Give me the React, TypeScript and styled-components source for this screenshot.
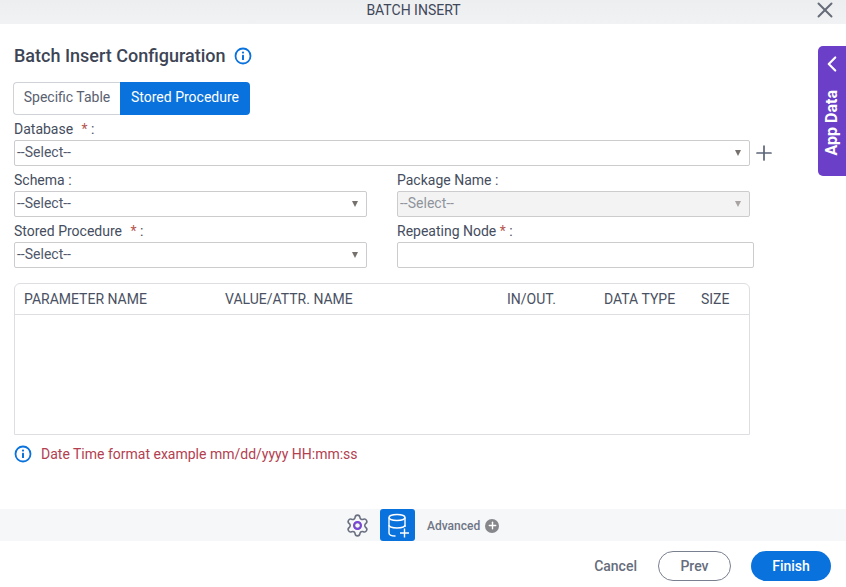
import React from 'react';
import styled, { createGlobalStyle } from 'styled-components';
import { X, Plus, ChevronLeft, Settings } from 'lucide-react';

const GlobalStyle = createGlobalStyle`
  html, body {
    margin: 0;
    padding: 0;
    background: #fff;
    font-family: Roboto, "Liberation Sans", sans-serif;
    color: #3f4759;
  }
`;

const Page = styled.div`
  position: relative;
  width: 846px;
  height: 587px;
  display: flex;
  flex-direction: column;
  overflow: hidden;
`;

const TitleBar = styled.header`
  height: 24px;
  flex: none;
  display: flex;
  align-items: center;
  justify-content: center;
  position: relative;
  background: linear-gradient(#eceef0, #f1f2f4);
  font-size: 14px;
  line-height: 20px;
  color: #3f4759;
  padding: 0 19px 4px 0;
  box-sizing: border-box;
`;

const CloseButton = styled.span`
  position: absolute;
  right: 8px;
  top: -3px;
  display: flex;
  color: #666c78;
`;

const Main = styled.main`
  flex: 1;
  padding: 20px 0 0 14px;
  box-sizing: border-box;
`;

const Heading = styled.div`
  display: flex;
  align-items: center;
  gap: 8px;
  height: 22px;
  font-size: 18px;
  font-weight: 500;
  color: #3d4555;

  svg {
    margin-top: 2px;
  }
`;

const Tabs = styled.div`
  display: flex;
  width: 237px;
  height: 33px;
  margin: 16px 0 0 -1px;
`;

const Tab = styled.div<{ $active?: boolean }>`
  flex: ${(p) => (p.$active ? '0 0 130px' : '1')};
  display: flex;
  align-items: center;
  justify-content: center;
  box-sizing: border-box;
  padding-bottom: 3px;
  font-size: 14px;
  color: ${(p) => (p.$active ? '#fff' : '#5a6170')};
  background: ${(p) => (p.$active ? '#0a72dc' : '#fff')};
  border: ${(p) => (p.$active ? 'none' : '1px solid #cfd2d6')};
  border-right: none;
  border-radius: ${(p) => (p.$active ? '0 4px 4px 0' : '4px 0 0 4px')};
`;

const Label = styled.label`
  display: block;
  height: 18px;
  margin-top: 5px;
  font-size: 14px;
  line-height: 18px;
  color: #454d5e;
`;

const Star = styled.span<{ $gap?: boolean }>`
  color: #b5564f;
  margin-left: ${(p) => (p.$gap ? '5px' : '0')};
`;

const WideRow = styled.div`
  display: flex;
  align-items: center;
  width: 760px;
  gap: 2px;
  margin-top: 2px;
`;

const Grid = styled.div`
  display: grid;
  grid-template-columns: 353px 353px;
  column-gap: 30px;
`;

const Field = styled.div`
  min-width: 0;
`;

const SelectBox = styled.div<{ $disabled?: boolean; $wide?: boolean }>`
  position: relative;
  width: ${(p) => (p.$wide ? '736px' : '353px')};
  flex: none;
  height: 26px;
  margin-top: ${(p) => (p.$wide ? '0' : '2px')};
  padding: 0 0 2px 2px;
  box-sizing: border-box;
  display: flex;
  align-items: center;
  font-size: 14px;
  color: ${(p) => (p.$disabled ? '#8f939b' : '#50576a')};
  background: ${(p) => (p.$disabled ? '#f3f3f4' : '#fff')};
  border: 1px solid #cccccf;
  border-radius: 2px;
`;

const Caret = styled.span<{ $disabled?: boolean }>`
  position: absolute;
  right: 8px;
  top: 9px;
  width: 0;
  height: 0;
  border-left: 3.5px solid transparent;
  border-right: 3.5px solid transparent;
  border-top: 6px solid ${(p) => (p.$disabled ? '#a8a3a0' : '#77716d')};
`;

const TextInput = styled.input`
  display: block;
  width: 357px;
  height: 26px;
  margin-top: 2px;
  box-sizing: border-box;
  border: 1px solid #cccccf;
  border-radius: 2px;
  background: #fff;
  outline: none;
`;

const AddIcon = styled.span`
  display: flex;
  color: #5b6478;
`;

const ParamTable = styled.div`
  width: 736px;
  height: 152px;
  margin-top: 15px;
  box-sizing: border-box;
  border: 1px solid #dcdee1;
  border-radius: 6px 6px 0 0;
`;

const TableHead = styled.div`
  height: 31px;
  box-sizing: border-box;
  border-bottom: 1px solid #dcdee1;
  display: grid;
  grid-template-columns: 201px 282px 97px 97px 1fr;
  padding-left: 9px;
  align-items: center;
  font-size: 14px;
  color: #4a5163;
`;

const Note = styled.div`
  display: flex;
  align-items: center;
  gap: 9px;
  height: 18px;
  margin-top: 10px;
  font-size: 14px;
  color: #b3404f;
`;

const ToolBar = styled.div`
  height: 32px;
  flex: none;
  display: flex;
  align-items: center;
  background: #f6f7f9;
  padding-left: 345px;
  box-sizing: border-box;
`;

const GearWrap = styled.span`
  display: flex;
  position: relative;
  color: #6a7080;
  margin-right: 10px;
`;

const GearDot = styled.span`
  position: absolute;
  left: 8px;
  top: 8px;
  width: 9px;
  height: 9px;
  box-sizing: border-box;
  border: 2px solid #7a45d8;
  border-radius: 50%;
`;

const DbButton = styled.span`
  width: 35px;
  height: 32px;
  display: flex;
  align-items: center;
  justify-content: center;
  background: #0a72dc;
  border-radius: 3px;
`;

const Advanced = styled.span`
  margin: 1px 0 0 12px;
  font-size: 12px;
  font-weight: 500;
  color: #6f7585;
`;

const AdvancedPlus = styled.span`
  margin: 1px 0 0 5px;
  width: 14px;
  height: 14px;
  border-radius: 50%;
  background: #85878b;
  color: #fff;
  display: flex;
  align-items: center;
  justify-content: center;
`;

const Footer = styled.footer`
  height: 46px;
  flex: none;
  display: flex;
  align-items: flex-start;
  justify-content: flex-end;
  padding: 10px 15px 0 0;
  box-sizing: border-box;
`;

const CancelLink = styled.span`
  align-self: center;
  margin: -6px 21px 0 0;
  font-size: 14px;
  font-weight: 500;
  color: #666d7c;
`;

const FooterButton = styled.button<{ $primary?: boolean }>`
  height: 30px;
  width: ${(p) => (p.$primary ? '80px' : '73px')};
  margin-left: ${(p) => (p.$primary ? '20px' : '0')};
  border-radius: 15px;
  padding: 0;
  box-sizing: border-box;
  font-family: inherit;
  font-size: 14px;
  font-weight: 500;
  color: ${(p) => (p.$primary ? '#fff' : '#666d7c')};
  background: ${(p) => (p.$primary ? '#0a72dc' : '#fff')};
  border: ${(p) => (p.$primary ? 'none' : '1px solid #7a8090')};
`;

const AppDataTab = styled.aside`
  position: absolute;
  right: 0;
  top: 46px;
  width: 28px;
  height: 130px;
  background: #6c3fc8;
  border-radius: 5px 0 0 5px;
  color: #fff;
  display: flex;
  flex-direction: column;
  align-items: center;
  padding-top: 5px;
  box-sizing: border-box;
`;

const AppDataLabel = styled.span`
  writing-mode: vertical-rl;
  transform: rotate(180deg);
  font-size: 16px;
  line-height: 20px;
  font-weight: 700;
  margin-top: 13px;
`;

const InfoIcon = () => (
  <svg width="18" height="18" viewBox="0 0 18 18" fill="none">
    <circle cx="9" cy="9" r="7.5" stroke="#0a72dc" strokeWidth="1.8" />
    <circle cx="9" cy="5.6" r="1.1" fill="#0a72dc" />
    <rect x="8" y="7.8" width="2" height="5.2" rx="0.6" fill="#0a72dc" />
  </svg>
);

const DbPlusIcon = () => (
  <svg width="26" height="26" viewBox="0 0 26 26" fill="none" stroke="#fff" strokeWidth="1.4">
    <ellipse cx="12" cy="5.5" rx="8" ry="3" />
    <path d="M4 5.5V21c0 1.7 2.5 3 6.5 3" />
    <path d="M20 5.5V15" />
    <path d="M4 13c0 1.7 3.6 3 8 3s8-1.3 8-3" />
    <path d="M19.5 16.5v9M15 21h9" />
  </svg>
);

const Select = ({ disabled, wide }: { disabled?: boolean; wide?: boolean }) => (
  <SelectBox $disabled={disabled} $wide={wide}>
    --Select--
    <Caret $disabled={disabled} />
  </SelectBox>
);

const App = () => (
  <Page>
    <GlobalStyle />
    <TitleBar>
      BATCH INSERT
      <CloseButton>
        <X size={26} strokeWidth={1.8} />
      </CloseButton>
    </TitleBar>

    <Main>
      <Heading>
        Batch Insert Configuration
        <InfoIcon />
      </Heading>

      <Tabs>
        <Tab>Specific Table</Tab>
        <Tab $active>Stored Procedure</Tab>
      </Tabs>

      <Label>
        Database <Star $gap>*</Star> :
      </Label>
      <WideRow>
        <Select wide />
        <AddIcon>
          <Plus size={24} strokeWidth={1.7} />
        </AddIcon>
      </WideRow>

      <Grid>
        <Field>
          <Label>Schema :</Label>
          <Select />
        </Field>
        <Field>
          <Label>Package Name :</Label>
          <Select disabled />
        </Field>
        <Field>
          <Label>
            Stored Procedure <Star $gap>*</Star> :
          </Label>
          <Select />
        </Field>
        <Field>
          <Label>
            Repeating Node <Star>*</Star> :
          </Label>
          <TextInput />
        </Field>
      </Grid>

      <ParamTable>
        <TableHead>
          <span>PARAMETER NAME</span>
          <span>VALUE/ATTR. NAME</span>
          <span>IN/OUT.</span>
          <span>DATA TYPE</span>
          <span>SIZE</span>
        </TableHead>
      </ParamTable>

      <Note>
        <InfoIcon />
        Date Time format example mm/dd/yyyy HH:mm:ss
      </Note>
    </Main>

    <ToolBar>
      <GearWrap>
        <Settings size={25} strokeWidth={1.5} />
        <GearDot />
      </GearWrap>
      <DbButton>
        <DbPlusIcon />
      </DbButton>
      <Advanced>Advanced</Advanced>
      <AdvancedPlus>
        <Plus size={11} strokeWidth={3} />
      </AdvancedPlus>
    </ToolBar>

    <Footer>
      <CancelLink>Cancel</CancelLink>
      <FooterButton>Prev</FooterButton>
      <FooterButton $primary>Finish</FooterButton>
    </Footer>

    <AppDataTab>
      <ChevronLeft size={26} strokeWidth={2} />
      <AppDataLabel>App Data</AppDataLabel>
    </AppDataTab>
  </Page>
);

export default App;
